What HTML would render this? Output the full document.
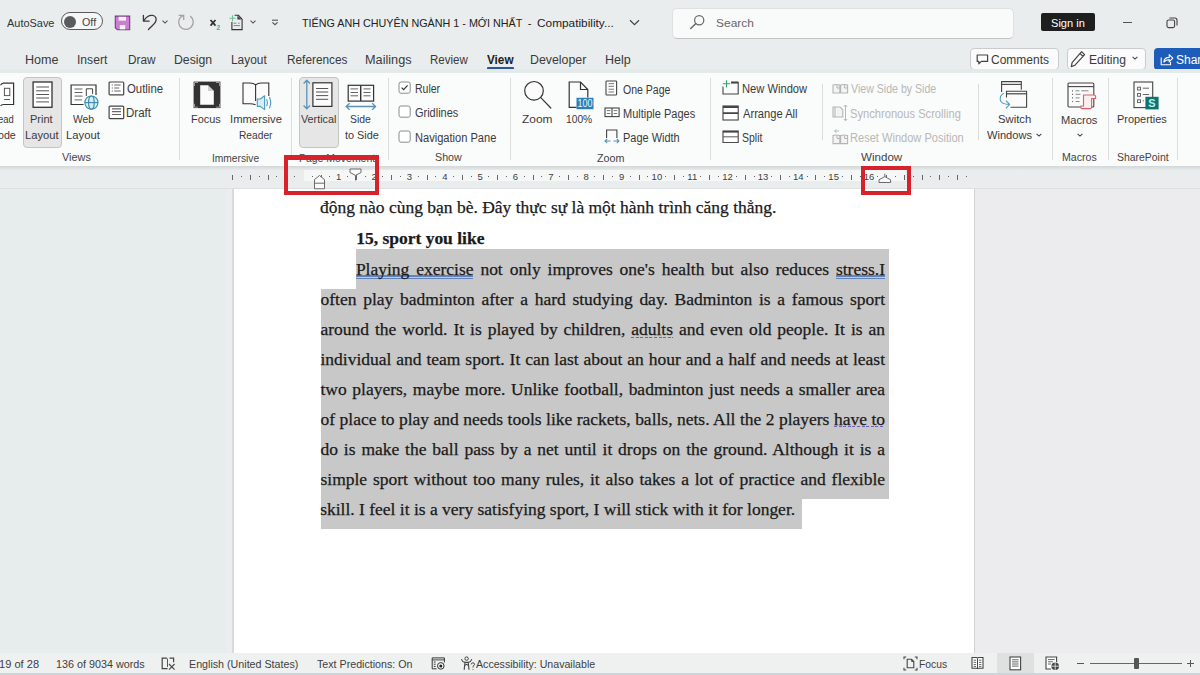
<!DOCTYPE html>
<html><head><meta charset="utf-8"><style>
html,body{margin:0;padding:0;}
body{width:1200px;height:675px;overflow:hidden;position:relative;background:#e7ecec;font-family:"Liberation Sans",sans-serif;}
.a{position:absolute;}
.tx{position:absolute;white-space:nowrap;line-height:1;transform-origin:0 0;}
.dl{position:absolute;white-space:nowrap;font-family:"Liberation Serif",serif;font-size:17.49px;line-height:1;color:#1a1a1a;-webkit-text-stroke:0.25px #1a1a1a;}
.j{text-align:justify;text-align-last:justify;white-space:normal;}

</style></head><body>
<!-- title + tabs background -->
<div class="a" style="left:0;top:0;width:1200px;height:72px;background:#e9eded;"></div>
<!-- autosave toggle -->
<div class="a" style="left:61px;top:12px;width:40px;height:16px;border:1px solid #5a5a5a;border-radius:10px;background:#f6f7f8;"></div>
<div class="a" style="left:64px;top:16px;width:12px;height:12px;border-radius:50%;background:#5b5b5b;"></div>
<!-- search box -->
<div class="a" style="left:672px;top:8.2px;width:342px;height:30.4px;background:#f9fafa;border:1px solid #dde1e1;border-bottom:1.5px solid #bfc3c3;border-radius:5px;box-sizing:border-box;"></div>
<!-- sign in -->
<div class="a" style="left:1041px;top:13px;width:54px;height:18px;background:#1e1e1e;border-radius:2px;"></div>
<!-- minimize -->
<div class="a" style="left:1123px;top:21.5px;width:9px;height:1.2px;background:#555;"></div>
<!-- tab underline -->
<div class="a" style="left:487px;top:67.2px;width:27px;height:2.6px;background:#2a5699;border-radius:1px;"></div>
<!-- buttons -->
<div class="a" style="left:969.5px;top:48px;width:89px;height:21.5px;border:1px solid #c9cbcd;border-radius:4px;background:#fbfbfb;box-sizing:border-box;"></div>
<div class="a" style="left:1066.5px;top:48px;width:79px;height:21.5px;border:1px solid #c9cbcd;border-radius:4px;background:#fbfbfb;box-sizing:border-box;"></div>
<div class="a" style="left:1153.5px;top:48px;width:60px;height:21.5px;border-radius:4px;background:#1d5cb8;"></div>
<!-- ribbon -->
<div class="a" style="left:0;top:69px;width:1200px;height:3.5px;background:#e4e9e9;"></div>
<div class="a" style="left:0;top:72.5px;width:1200px;height:93.5px;background:#fafbfb;"></div>

<!-- group separators -->
<div class="a" style="left:179px;top:78px;width:1px;height:82px;background:#dcdcdc;"></div>
<div class="a" style="left:291px;top:78px;width:1px;height:82px;background:#dcdcdc;"></div>
<div class="a" style="left:387.5px;top:78px;width:1px;height:82px;background:#dcdcdc;"></div>
<div class="a" style="left:509.5px;top:78px;width:1px;height:82px;background:#dcdcdc;"></div>
<div class="a" style="left:710px;top:78px;width:1px;height:82px;background:#dcdcdc;"></div>
<div class="a" style="left:822px;top:84px;width:1px;height:56px;background:#dcdcdc;"></div>
<div class="a" style="left:978px;top:84px;width:1px;height:56px;background:#dcdcdc;"></div>
<div class="a" style="left:1052px;top:78px;width:1px;height:82px;background:#dcdcdc;"></div>
<div class="a" style="left:1108px;top:78px;width:1px;height:82px;background:#dcdcdc;"></div>
<div class="a" style="left:1177px;top:78px;width:1px;height:82px;background:#dcdcdc;"></div>
<!-- active buttons -->
<div class="a" style="left:22.5px;top:77px;width:39.5px;height:71px;border:1px solid #c4c4c4;border-radius:4px;background:#e6e6e6;box-sizing:border-box;"></div>
<div class="a" style="left:299px;top:77px;width:40px;height:70.5px;border:1px solid #c4c4c4;border-radius:4px;background:#e6e6e6;box-sizing:border-box;"></div>
<!-- ruler strip -->
<div class="a" style="left:0;top:166px;width:1200px;height:22.5px;background:#e9eded;"></div>
<div class="a" style="left:0;top:165.5px;width:1200px;height:4px;background:linear-gradient(#d3d7d7,#e6eaea);"></div>
<div class="a" style="left:303.5px;top:169.8px;width:601px;height:11.4px;background:#f6f8f8;"></div>
<div class="a" style="left:0;top:188px;width:1200px;height:1px;background:#dde1e1;"></div>
<!-- page -->
<div class="a" style="left:975px;top:189px;width:225px;height:464px;background:#ecebee;"></div>
<div class="a" style="left:226px;top:189px;width:7px;height:464px;background:#ebedee;"></div>
<div class="a" style="left:232.3px;top:189px;width:1.6px;height:464px;background:#d9dada;"></div>
<div class="a" style="left:973.8px;top:189px;width:1.4px;height:464px;background:#d2d2d2;"></div>
<div class="a" style="left:233.9px;top:189px;width:739.9px;height:464px;background:#ffffff;"></div>
<!-- status bar -->
<div class="a" style="left:0;top:653px;width:1200px;height:22px;background:#eff1f1;"></div>
<div class="a" style="left:0;top:673.1px;width:1200px;height:1.9px;background:#cbd6da;"></div>
<div class="a" style="left:996.5px;top:653px;width:37.5px;height:20px;background:#dfe1e1;"></div>
<div class="a" style="left:1089.5px;top:662.6px;width:92px;height:1px;background:#666;"></div>
<div class="a" style="left:1134px;top:658px;width:4.7px;height:11px;background:#555;border-radius:1px;"></div>
<div class="a" style="left:1077px;top:662.5px;width:7px;height:1.3px;background:#555;"></div>
<div class="a" style="left:1187px;top:662.5px;width:7px;height:1.3px;background:#555;"></div>
<div class="a" style="left:1189.9px;top:659.5px;width:1.3px;height:7px;background:#555;"></div>

<div class="a" style="left:232px;top:174.5px;width:1.2px;height:5px;background:#666;"></div>
<div class="a" style="left:241px;top:176.2px;width:1.2px;height:1.2px;background:#666;"></div>
<div class="a" style="left:250px;top:174.5px;width:1.2px;height:5px;background:#666;"></div>
<div class="a" style="left:259px;top:176.2px;width:1.2px;height:1.2px;background:#666;"></div>
<div class="a" style="left:268px;top:174.5px;width:1.2px;height:5px;background:#666;"></div>
<div class="a" style="left:276px;top:176.2px;width:1.2px;height:1.2px;background:#666;"></div>
<div class="a" style="left:285px;top:174.5px;width:1.2px;height:5px;background:#666;"></div>
<div class="a" style="left:294px;top:176.2px;width:1.2px;height:1.2px;background:#666;"></div>
<div class="a" style="left:312px;top:176.2px;width:1.2px;height:1.2px;background:#666;"></div>
<div class="a" style="left:321px;top:174.5px;width:1.2px;height:5px;background:#666;"></div>
<div class="a" style="left:329px;top:176.2px;width:1.2px;height:1.2px;background:#666;"></div>
<span class="a" style="left:323.75px;top:172.3px;width:30px;text-align:center;font-size:9.5px;line-height:9px;color:#3d3d3d;">1</span>
<div class="a" style="left:347px;top:176.2px;width:1.2px;height:1.2px;background:#666;"></div>
<div class="a" style="left:356px;top:174.5px;width:1.2px;height:5px;background:#666;"></div>
<div class="a" style="left:365px;top:176.2px;width:1.2px;height:1.2px;background:#666;"></div>
<span class="a" style="left:359.10px;top:172.3px;width:30px;text-align:center;font-size:9.5px;line-height:9px;color:#3d3d3d;">2</span>
<div class="a" style="left:382px;top:176.2px;width:1.2px;height:1.2px;background:#666;"></div>
<div class="a" style="left:391px;top:174.5px;width:1.2px;height:5px;background:#666;"></div>
<div class="a" style="left:400px;top:176.2px;width:1.2px;height:1.2px;background:#666;"></div>
<span class="a" style="left:394.45px;top:172.3px;width:30px;text-align:center;font-size:9.5px;line-height:9px;color:#3d3d3d;">3</span>
<div class="a" style="left:418px;top:176.2px;width:1.2px;height:1.2px;background:#666;"></div>
<div class="a" style="left:427px;top:174.5px;width:1.2px;height:5px;background:#666;"></div>
<div class="a" style="left:435px;top:176.2px;width:1.2px;height:1.2px;background:#666;"></div>
<span class="a" style="left:429.80px;top:172.3px;width:30px;text-align:center;font-size:9.5px;line-height:9px;color:#3d3d3d;">4</span>
<div class="a" style="left:453px;top:176.2px;width:1.2px;height:1.2px;background:#666;"></div>
<div class="a" style="left:462px;top:174.5px;width:1.2px;height:5px;background:#666;"></div>
<div class="a" style="left:471px;top:176.2px;width:1.2px;height:1.2px;background:#666;"></div>
<span class="a" style="left:465.15px;top:172.3px;width:30px;text-align:center;font-size:9.5px;line-height:9px;color:#3d3d3d;">5</span>
<div class="a" style="left:488px;top:176.2px;width:1.2px;height:1.2px;background:#666;"></div>
<div class="a" style="left:497px;top:174.5px;width:1.2px;height:5px;background:#666;"></div>
<div class="a" style="left:506px;top:176.2px;width:1.2px;height:1.2px;background:#666;"></div>
<span class="a" style="left:500.50px;top:172.3px;width:30px;text-align:center;font-size:9.5px;line-height:9px;color:#3d3d3d;">6</span>
<div class="a" style="left:524px;top:176.2px;width:1.2px;height:1.2px;background:#666;"></div>
<div class="a" style="left:533px;top:174.5px;width:1.2px;height:5px;background:#666;"></div>
<div class="a" style="left:541px;top:176.2px;width:1.2px;height:1.2px;background:#666;"></div>
<span class="a" style="left:535.85px;top:172.3px;width:30px;text-align:center;font-size:9.5px;line-height:9px;color:#3d3d3d;">7</span>
<div class="a" style="left:559px;top:176.2px;width:1.2px;height:1.2px;background:#666;"></div>
<div class="a" style="left:568px;top:174.5px;width:1.2px;height:5px;background:#666;"></div>
<div class="a" style="left:577px;top:176.2px;width:1.2px;height:1.2px;background:#666;"></div>
<span class="a" style="left:571.20px;top:172.3px;width:30px;text-align:center;font-size:9.5px;line-height:9px;color:#3d3d3d;">8</span>
<div class="a" style="left:594px;top:176.2px;width:1.2px;height:1.2px;background:#666;"></div>
<div class="a" style="left:603px;top:174.5px;width:1.2px;height:5px;background:#666;"></div>
<div class="a" style="left:612px;top:176.2px;width:1.2px;height:1.2px;background:#666;"></div>
<span class="a" style="left:606.55px;top:172.3px;width:30px;text-align:center;font-size:9.5px;line-height:9px;color:#3d3d3d;">9</span>
<div class="a" style="left:630px;top:176.2px;width:1.2px;height:1.2px;background:#666;"></div>
<div class="a" style="left:639px;top:174.5px;width:1.2px;height:5px;background:#666;"></div>
<div class="a" style="left:647px;top:176.2px;width:1.2px;height:1.2px;background:#666;"></div>
<span class="a" style="left:641.90px;top:172.3px;width:30px;text-align:center;font-size:9.5px;line-height:9px;color:#3d3d3d;">10</span>
<div class="a" style="left:665px;top:176.2px;width:1.2px;height:1.2px;background:#666;"></div>
<div class="a" style="left:674px;top:174.5px;width:1.2px;height:5px;background:#666;"></div>
<div class="a" style="left:683px;top:176.2px;width:1.2px;height:1.2px;background:#666;"></div>
<span class="a" style="left:677.25px;top:172.3px;width:30px;text-align:center;font-size:9.5px;line-height:9px;color:#3d3d3d;">11</span>
<div class="a" style="left:700px;top:176.2px;width:1.2px;height:1.2px;background:#666;"></div>
<div class="a" style="left:709px;top:174.5px;width:1.2px;height:5px;background:#666;"></div>
<div class="a" style="left:718px;top:176.2px;width:1.2px;height:1.2px;background:#666;"></div>
<span class="a" style="left:712.60px;top:172.3px;width:30px;text-align:center;font-size:9.5px;line-height:9px;color:#3d3d3d;">12</span>
<div class="a" style="left:736px;top:176.2px;width:1.2px;height:1.2px;background:#666;"></div>
<div class="a" style="left:745px;top:174.5px;width:1.2px;height:5px;background:#666;"></div>
<div class="a" style="left:754px;top:176.2px;width:1.2px;height:1.2px;background:#666;"></div>
<span class="a" style="left:747.95px;top:172.3px;width:30px;text-align:center;font-size:9.5px;line-height:9px;color:#3d3d3d;">13</span>
<div class="a" style="left:771px;top:176.2px;width:1.2px;height:1.2px;background:#666;"></div>
<div class="a" style="left:780px;top:174.5px;width:1.2px;height:5px;background:#666;"></div>
<div class="a" style="left:789px;top:176.2px;width:1.2px;height:1.2px;background:#666;"></div>
<span class="a" style="left:783.30px;top:172.3px;width:30px;text-align:center;font-size:9.5px;line-height:9px;color:#3d3d3d;">14</span>
<div class="a" style="left:807px;top:176.2px;width:1.2px;height:1.2px;background:#666;"></div>
<div class="a" style="left:815px;top:174.5px;width:1.2px;height:5px;background:#666;"></div>
<div class="a" style="left:824px;top:176.2px;width:1.2px;height:1.2px;background:#666;"></div>
<span class="a" style="left:818.65px;top:172.3px;width:30px;text-align:center;font-size:9.5px;line-height:9px;color:#3d3d3d;">15</span>
<div class="a" style="left:842px;top:176.2px;width:1.2px;height:1.2px;background:#666;"></div>
<div class="a" style="left:851px;top:174.5px;width:1.2px;height:5px;background:#666;"></div>
<div class="a" style="left:860px;top:176.2px;width:1.2px;height:1.2px;background:#666;"></div>
<span class="a" style="left:854.00px;top:172.3px;width:30px;text-align:center;font-size:9.5px;line-height:9px;color:#3d3d3d;">16</span>
<div class="a" style="left:877px;top:176.2px;width:1.2px;height:1.2px;background:#666;"></div>
<div class="a" style="left:886px;top:174.5px;width:1.2px;height:5px;background:#666;"></div>
<div class="a" style="left:895px;top:176.2px;width:1.2px;height:1.2px;background:#666;"></div>
<div class="a" style="left:904px;top:174.5px;width:1.2px;height:5px;background:#666;"></div>
<div class="a" style="left:913px;top:176.2px;width:1.2px;height:1.2px;background:#666;"></div>
<div class="a" style="left:922px;top:174.5px;width:1.2px;height:5px;background:#666;"></div>
<div class="a" style="left:930px;top:176.2px;width:1.2px;height:1.2px;background:#666;"></div>
<div class="a" style="left:939px;top:174.5px;width:1.2px;height:5px;background:#666;"></div>
<div class="a" style="left:948px;top:176.2px;width:1.2px;height:1.2px;background:#666;"></div>
<div class="a" style="left:957px;top:174.5px;width:1.2px;height:5px;background:#666;"></div>
<div class="a" style="left:966px;top:176.2px;width:1.2px;height:1.2px;background:#666;"></div>
<svg class="a" style="left:313px;top:173.5px" width="13" height="16" viewBox="0 0 13 16">
<path d="M1.5 14.8 V5.6 L6.5 1.5 L11.5 5.6 V14.8 Z M1.5 9.2 H11.5" fill="#fafafa" stroke="#6a6a6a" stroke-width="1" stroke-linejoin="round"/></svg>
<svg class="a" style="left:348.5px;top:167.5px" width="13" height="13" viewBox="0 0 13 13">
<path d="M1 1 H12 V4.5 L6.5 7.4 L1 4.5 Z" fill="#fafafa" stroke="#6a6a6a" stroke-width="1" stroke-linejoin="round"/><path d="M6.5 7.4 V12.5" stroke="#6a6a6a" stroke-width="1"/></svg>
<svg class="a" style="left:877.5px;top:173px" width="14" height="11" viewBox="0 0 14 11">
<path d="M1 9.5 V6.8 L6.8 3.6 L12.6 6.8 V9.5 Z" fill="#fafafa" stroke="#6a6a6a" stroke-width="1" stroke-linejoin="round"/><path d="M6.8 3.6 V0.8" stroke="#6a6a6a" stroke-width="1"/></svg>
<div class="a" style="left:356px;top:249px;width:533px;height:39.7px;background:#c8c8c8;"></div>
<div class="a" style="left:320.7px;top:288.7px;width:568.3px;height:210.1px;background:#c8c8c8;"></div>
<div class="a" style="left:320.7px;top:498.8px;width:481.1px;height:29.8px;background:#c8c8c8;"></div>
<div class="a" style="left:356px;top:275.4px;width:117px;height:1.3px;background:#6383bb;"></div>
<div class="a" style="left:356px;top:277.6px;width:117px;height:1.3px;background:#6383bb;"></div>
<div class="a" style="left:835.7px;top:275.4px;width:49.3px;height:1.3px;background:#6383bb;"></div>
<div class="a" style="left:835.7px;top:277.6px;width:49.3px;height:1.3px;background:#6383bb;"></div>
<div class="a" style="left:631px;top:336.5px;width:42px;height:1.8px;background:repeating-linear-gradient(90deg,#6e62b6 0 3px,transparent 3px 4.6px);"></div>
<div class="a" style="left:833.8px;top:425.5px;width:51.2px;height:1.8px;background:repeating-linear-gradient(90deg,#6e62b6 0 3px,transparent 3px 4.6px);"></div>
<div class="dl" style="left:320.0px;top:198.85px;">động nào cùng bạn bè. Đây thực sự là một hành trình căng thẳng.</div>
<div class="dl" style="left:356.2px;top:230.15px;font-weight:700;">15, sport you like</div>
<div class="dl j" style="left:355.9px;top:260.55px;width:529.1px;">Playing exercise not only improves one's health but also reduces stress.I</div>
<div class="dl j" style="left:320.5px;top:290.55px;width:564.5px;">often play badminton after a hard studying day. Badminton is a famous sport</div>
<div class="dl j" style="left:320.5px;top:320.55px;width:564.5px;">around the world. It is played by children, adults and even old people. It is an</div>
<div class="dl j" style="left:320.5px;top:350.55px;width:564.5px;">individual and team sport. It can last about an hour and a half and needs at least</div>
<div class="dl j" style="left:320.5px;top:380.55px;width:564.5px;">two players, maybe more. Unlike football, badminton just needs a smaller area</div>
<div class="dl j" style="left:320.5px;top:410.55px;width:564.5px;">of place to play and needs tools like rackets, balls, nets. All the 2 players have to</div>
<div class="dl j" style="left:320.5px;top:440.55px;width:564.5px;">do is make the ball pass by a net until it drops on the ground. Although it is a</div>
<div class="dl j" style="left:320.5px;top:470.55px;width:564.5px;">simple sport without too many rules, it also takes a lot of practice and flexible</div>
<div class="dl" style="left:320.2px;top:500.55px;">skill. I feel it is a very satisfying sport, I will stick with it for longer.</div>
<!-- save -->
<svg class="a" style="left:114px;top:14.5px" width="17" height="16" viewBox="0 0 17 16">
<path d="M1.3 1.1 H15.7 V14.8 H3.4 L1.3 12.7 Z" fill="#c980d3" stroke="#7b3c85" stroke-width="1.1"/>
<rect x="4.6" y="1.8" width="7.4" height="3.8" fill="#fbf3fc"/>
<rect x="5.8" y="10.1" width="5.4" height="4.2" fill="#fbf3fc"/>
</svg>
<!-- undo -->
<svg class="a" style="left:142px;top:14px" width="16" height="17" viewBox="0 0 16 17">
<path d="M1.9 6.6 C4 3 7.5 1.1 10.6 1.4 C14 1.8 15 5.2 13.4 8.2 C12 10.6 8.6 13 6.4 15.6" fill="none" stroke="#3a3a3a" stroke-width="1.3" stroke-linecap="round"/>
<path d="M1.4 1.3 V7.1 H7.2" fill="none" stroke="#3a3a3a" stroke-width="1.3" stroke-linecap="round" stroke-linejoin="round"/>
</svg>
<svg class="a" style="left:162px;top:20px" width="6" height="4" viewBox="0 0 6 4"><path d="M0.5 0.7 L3 3.1 L5.5 0.7" fill="none" stroke="#555" stroke-width="1.1"/></svg>
<!-- redo -->
<svg class="a" style="left:177px;top:13px" width="18" height="18" viewBox="0 0 18 18">
<path d="M6.2 2.3 A7.3 7.3 0 1 0 13.2 3.1" fill="none" stroke="#a3a3a3" stroke-width="1.3"/>
<path d="M1.6 2.4 H6.7 V7" fill="none" stroke="#a3a3a3" stroke-width="1.3" stroke-linejoin="miter"/>
</svg>
<!-- x2 -->
<svg class="a" style="left:209px;top:18px" width="13" height="13" viewBox="0 0 13 13">
<path d="M1.5 2 L6.5 7.6 M6.5 2 L1.5 7.6" stroke="#333" stroke-width="1.8"/>
<text x="7.4" y="11.6" font-family="Liberation Sans" font-size="6.5" font-weight="700" fill="#5b9cb5">2</text>
</svg>
<!-- new doc -->
<svg class="a" style="left:227.5px;top:14px" width="16" height="17" viewBox="0 0 16 17">
<path d="M3.9 8 V15.6 H14.1 V5.2 L10.5 1.3 H6.6" fill="none" stroke="#333" stroke-width="1.1"/>
<path d="M9.4 1.5 L13.8 5.6 L9.4 5.6 Z" fill="#444"/>
<path d="M1.4 4.3 H7.6 M4.5 1.3 V7.2" stroke="#6cc095" stroke-width="1.1"/>
<path d="M5.6 9.2 H8.4 M10 9.2 H11.6 M5.6 11.6 H12" stroke="#777" stroke-width="0.9"/>
</svg>
<svg class="a" style="left:250.3px;top:20.2px" width="6" height="4" viewBox="0 0 6 4"><path d="M0.5 0.7 L3 3.1 L5.5 0.7" fill="none" stroke="#555" stroke-width="1.1"/></svg>
<!-- customize -->
<svg class="a" style="left:270.5px;top:18.5px" width="8" height="7" viewBox="0 0 8 7"><path d="M1 1.2 H7" stroke="#555" stroke-width="1.1"/><path d="M1.4 3.4 L4 5.8 L6.6 3.4" fill="none" stroke="#555" stroke-width="1.2"/></svg>
<!-- title chevron -->
<svg class="a" style="left:629px;top:18.5px" width="11" height="7" viewBox="0 0 11 7"><path d="M1 1.2 L5.5 5.6 L10 1.2" fill="none" stroke="#444" stroke-width="1.2"/></svg>
<!-- search icon -->
<svg class="a" style="left:689px;top:14px" width="17" height="16" viewBox="0 0 17 16"><circle cx="10.2" cy="6.2" r="4.6" fill="none" stroke="#666" stroke-width="1.2"/><path d="M6.9 9.5 L1.7 14.6" stroke="#666" stroke-width="1.4" stroke-linecap="round"/></svg>
<!-- restore -->
<svg class="a" style="left:1166px;top:17px" width="12" height="12" viewBox="0 0 12 12"><rect x="1" y="3" width="7.6" height="7.6" rx="1.6" fill="none" stroke="#444" stroke-width="1.1"/><path d="M3.4 1 H8.8 Q11 1 11 3.2 V8.6" fill="none" stroke="#444" stroke-width="1.1"/></svg>
<!-- comments icon -->
<svg class="a" style="left:976px;top:53.5px" width="13" height="11" viewBox="0 0 13 11"><path d="M1.2 1 H11.6 V7.4 H5.4 L2.8 9.8 V7.4 H1.2 Z" fill="none" stroke="#444" stroke-width="1.2" stroke-linejoin="round"/></svg>
<!-- pencil -->
<svg class="a" style="left:1070px;top:50px" width="16" height="18" viewBox="0 0 16 18"><path d="M11.6 1.6 L14.6 4.6 L5 15.2 L1.3 16.6 L2.1 12.6 Z M10 3.5 L13 6.4" fill="none" stroke="#444" stroke-width="1.2" stroke-linejoin="round"/></svg>
<svg class="a" style="left:1131.5px;top:56px" width="6" height="4" viewBox="0 0 6 4"><path d="M0.6 0.8 L3 3.1 L5.4 0.8" fill="none" stroke="#444" stroke-width="1.1"/></svg>
<!-- share icon -->
<svg class="a" style="left:1159.5px;top:52px" width="14" height="14" viewBox="0 0 14 14"><path d="M1.2 5.5 V12.8 H10.5 V10" fill="none" stroke="#fff" stroke-width="1.1"/><path d="M3.8 10 C4.2 6.8 6.6 5.4 9.2 5.4 V2.6 L12.8 6.2 L9.2 9.8 V7.6 C7 7.6 5.5 8.2 3.8 10 Z" fill="none" stroke="#fff" stroke-width="1.1" stroke-linejoin="round"/></svg>
<!-- read mode (cut) -->
<svg class="a" style="left:0;top:82px" width="15" height="24" viewBox="0 0 15 24">
<path d="M0.6 3.2 Q1.5 1.3 3.5 1.2 H13.6 V22.5 H3.5 Q1.5 22.6 0.6 24" fill="#fff" stroke="#333" stroke-width="1.2"/>
<rect x="4.4" y="6.3" width="5.4" height="7.3" fill="none" stroke="#555" stroke-width="1"/>
<path d="M4.2 17.5 H10" stroke="#555" stroke-width="1"/>
</svg>
<!-- print layout -->
<svg class="a" style="left:31.5px;top:80.5px" width="21" height="27" viewBox="0 0 21 27">
<rect x="1.1" y="1" width="18.9" height="25.3" fill="#fff" stroke="#333" stroke-width="1.3"/>
<path d="M4.2 6 H17 M4.2 9.8 H17 M4.2 13.5 H17 M4.2 17 H17 M4.2 20.9 H17" stroke="#555" stroke-width="1"/>
</svg>
<!-- web layout -->
<svg class="a" style="left:69.5px;top:83.5px" width="30" height="28" viewBox="0 0 30 28">
<path d="M13.5 20.5 H1.1 V1 H26 V11" fill="#fff" stroke="#333" stroke-width="1.2"/>
<path d="M4.5 5 H12.5 M4.5 8.5 H12.5 M4.5 12.1 H12.5 M4.5 15.9 H12" stroke="#666" stroke-width="1"/>
<path d="M16.3 12 V4.8 H22.6 V10" fill="none" stroke="#444" stroke-width="1"/>
<circle cx="21.4" cy="18.6" r="6.6" fill="#cfeff9" stroke="#3f88a6" stroke-width="1.1"/>
<path d="M14.8 18.6 H28" stroke="#3f88a6" stroke-width="1.1"/>
<ellipse cx="21.4" cy="18.6" rx="2.8" ry="6.6" fill="none" stroke="#3f88a6" stroke-width="1.1"/>
</svg>
<!-- outline -->
<svg class="a" style="left:107.5px;top:80.5px" width="17" height="15" viewBox="0 0 17 15">
<rect x="1.1" y="1" width="14.6" height="12.9" rx="1" fill="#fff" stroke="#444" stroke-width="1.2"/>
<path d="M3.8 4 H4.8 M3.8 7 H4.8 M3.8 10 H4.8" stroke="#555" stroke-width="1.1"/>
<path d="M6.2 4 H12.6 M6.2 7 H11.2 M6.2 10 H12.6" stroke="#666" stroke-width="1"/>
</svg>
<!-- draft -->
<svg class="a" style="left:107.5px;top:105px" width="17" height="15" viewBox="0 0 17 15">
<rect x="1.1" y="1.1" width="14.6" height="12.6" rx="1" fill="#fff" stroke="#444" stroke-width="1.2"/>
<path d="M4 3.9 H13 M4 6.6 H13 M4 9.5 H13" stroke="#666" stroke-width="1.1"/>
</svg>
<!-- focus -->
<svg class="a" style="left:192.5px;top:80.5px" width="28" height="28" viewBox="0 0 28 28">
<rect x="0.6" y="0.6" width="26.8" height="26.5" fill="#333"/>
<path d="M1.5 5 V1.5 H5 M23 1.5 H26.5 V5 M26.5 22.8 V26.2 H23 M5 26.2 H1.5 V22.8" fill="none" stroke="#999" stroke-width="1"/>
<path d="M7.2 4.3 H15 L20.8 10 V23.7 H7.2 Z" fill="#fbfbfb"/>
<path d="M15 4.3 V10 H20.8 Z" fill="#cfcfcf"/>
</svg>
<!-- immersive reader -->
<svg class="a" style="left:241.5px;top:81.5px" width="31" height="29" viewBox="0 0 31 29">
<path d="M13.6 22.8 Q11 21.7 8 21.7 H1 V1 H8 Q11.5 1 13.6 2.8 Q15.7 1 19.2 1 H26.8 V14" fill="#fbfbfb" stroke="#333" stroke-width="1.1"/>
<path d="M13.6 2.8 V19" stroke="#333" stroke-width="1.1"/>
<path d="M15.3 17 H18.3 L22.6 13.8 V27.6 L18.3 24.4 H15.3 Z" fill="#d5eef8" stroke="#4c9cc0" stroke-width="1.1" stroke-linejoin="round"/>
<path d="M24.8 17.6 Q26 20.7 24.8 23.8 M27.6 15.5 Q29.8 20.7 27.6 25.9" fill="none" stroke="#4c9cc0" stroke-width="1.1" stroke-linecap="round"/>
</svg>
<!-- vertical -->
<svg class="a" style="left:302px;top:79px" width="31" height="31" viewBox="0 0 31 31">
<path d="M4.8 1.2 V29.8 M1.6 4.5 L4.8 1.2 L8 4.5 M1.6 26.5 L4.8 29.8 L8 26.5" fill="none" stroke="#5b93b5" stroke-width="1.3" stroke-linejoin="round"/>
<rect x="10.9" y="3.8" width="19" height="23.6" fill="#fbfbfb" stroke="#333" stroke-width="1.2"/>
<path d="M14 9.5 H26.2 M14 13 H26.2 M14 16.6 H26.2 M14 20.3 H26.2" stroke="#555" stroke-width="1"/>
</svg>
<!-- side to side -->
<svg class="a" style="left:345px;top:83.5px" width="32" height="27" viewBox="0 0 32 27">
<rect x="3.2" y="1.3" width="25.4" height="15.8" fill="#fbfbfb" stroke="#333" stroke-width="1.2"/>
<path d="M15.7 1.3 V17.1" stroke="#333" stroke-width="1.4"/>
<path d="M5.5 4.9 H13 M5.5 8.5 H13 M5.5 11.8 H13 M18.5 4.9 H25.5 M18.5 8.5 H25.5 M18.5 11.8 H25.5" stroke="#666" stroke-width="1"/>
<path d="M1.2 22.5 H30.6 M4.6 19.2 L1.2 22.5 L4.6 25.8 M27.2 19.2 L30.6 22.5 L27.2 25.8" fill="none" stroke="#5b93b5" stroke-width="1.3" stroke-linejoin="round"/>
</svg>
<!-- checkboxes -->
<svg class="a" style="left:397.5px;top:81px" width="13" height="13" viewBox="0 0 13 13"><rect x="1" y="1" width="11.2" height="11.2" rx="2" fill="#fff" stroke="#8c8c8c" stroke-width="1"/><path d="M3.6 6.6 L5.6 8.6 L9.6 4.4" fill="none" stroke="#333" stroke-width="1.2"/></svg>
<svg class="a" style="left:397.5px;top:105px" width="13" height="13" viewBox="0 0 13 13"><rect x="1" y="1" width="11.2" height="11.2" rx="2" fill="#fff" stroke="#8c8c8c" stroke-width="1"/></svg>
<svg class="a" style="left:397.5px;top:129.8px" width="13" height="13" viewBox="0 0 13 13"><rect x="1" y="1" width="11.2" height="11.2" rx="2" fill="#fff" stroke="#8c8c8c" stroke-width="1"/></svg>
<!-- zoom -->
<svg class="a" style="left:523px;top:80px" width="30" height="30" viewBox="0 0 30 30">
<circle cx="11" cy="10.8" r="9.3" fill="#fbfbfb" stroke="#333" stroke-width="1.2"/>
<path d="M17.8 17.6 L27.8 28" stroke="#333" stroke-width="1.2" stroke-linecap="round"/>
</svg>
<!-- 100% -->
<svg class="a" style="left:567.5px;top:80.5px" width="27" height="29" viewBox="0 0 27 29">
<path d="M8.5 26.4 H1.2 V1 H12.5 L19.8 8.5 V16.6" fill="#fbfbfb" stroke="#333" stroke-width="1.2"/>
<path d="M12.5 1 V8.5 H19.8" fill="none" stroke="#333" stroke-width="1.2"/>
<rect x="8.5" y="16.8" width="17" height="11.4" fill="#2b7fb8"/>
<text x="17" y="26.2" text-anchor="middle" font-family="Liberation Sans" font-size="10" fill="#e9f6ff" textLength="15" lengthAdjust="spacingAndGlyphs">100</text>
</svg>
<!-- one page -->
<svg class="a" style="left:605px;top:79.8px" width="13" height="16" viewBox="0 0 13 16">
<rect x="1" y="1" width="10.6" height="14" rx="0.8" fill="#fff" stroke="#444" stroke-width="1.1"/>
<path d="M3.5 3.7 H9 M3.5 6.3 H9 M3.5 9.2 H9 M3.5 12 H9" stroke="#666" stroke-width="0.9"/>
</svg>
<!-- multiple pages -->
<svg class="a" style="left:603.5px;top:107px" width="16" height="11" viewBox="0 0 16 11">
<rect x="1" y="1" width="14.1" height="8.6" fill="#fff" stroke="#444" stroke-width="1.1"/>
<path d="M8 1 V9.6" stroke="#444" stroke-width="1.1"/>
<path d="M2.8 3.6 H6.4 M2.8 6.5 H6.4 M9.6 3.6 H13.2 M9.6 6.5 H13.2" stroke="#666" stroke-width="0.9"/>
</svg>
<!-- page width -->
<svg class="a" style="left:603.5px;top:128.5px" width="16" height="15" viewBox="0 0 16 15">
<path d="M2.6 9 V1 H12.9 V9" fill="none" stroke="#444" stroke-width="1.1"/>
<path d="M1 12 H6.5 M3.2 9.9 L1 12 L3.2 14.1 M9.5 12 H15 M12.8 9.9 L15 12 L12.8 14.1" fill="none" stroke="#5a96b0" stroke-width="1.1"/>
</svg>
<!-- new window -->
<svg class="a" style="left:721.5px;top:80px" width="17" height="15" viewBox="0 0 17 15">
<path d="M1 6.5 V14 H16.2 V2.2 H9" fill="none" stroke="#444" stroke-width="1.1"/>
<path d="M9 2.6 H16.2" stroke="#444" stroke-width="1.9"/>
<path d="M0.8 3.8 H8.2 M4.5 0.2 V7.6" stroke="#3aa36a" stroke-width="1.1"/>
</svg>
<!-- arrange all -->
<svg class="a" style="left:721.5px;top:104.5px" width="17" height="16" viewBox="0 0 17 16">
<rect x="1" y="1" width="15.2" height="14" fill="#fff" stroke="#444" stroke-width="1.1"/>
<path d="M1 2 H16.2 M1 8.2 H16.2" stroke="#444" stroke-width="1.8"/>
</svg>
<!-- split -->
<svg class="a" style="left:721.5px;top:130px" width="17" height="13" viewBox="0 0 17 13">
<rect x="1" y="1" width="15.2" height="11.6" fill="#fff" stroke="#444" stroke-width="1.1"/>
<path d="M1 1.8 H16.2" stroke="#444" stroke-width="1.6"/>
<path d="M1 6.8 H16.2" stroke="#666" stroke-width="1.1"/>
</svg>
<!-- disabled window icons -->
<svg class="a" style="left:831.5px;top:82.5px" width="17" height="11" viewBox="0 0 17 11">
<path d="M1 2 Q4 1 7.8 2 V10 H1 Z M8.6 2 Q12 1 15.6 2 V10 H8.6 Z" fill="#f3f3f3" stroke="#b5b5b5" stroke-width="1.1"/>
<path d="M5 2 V5 H7.8 M12.6 2 V5 H15.6" fill="none" stroke="#b5b5b5" stroke-width="1"/>
</svg>
<svg class="a" style="left:831.5px;top:103.5px" width="16" height="18" viewBox="0 0 16 18">
<path d="M1 3 H8 L10.8 5.8 V13 H1 Z" fill="#f3f3f3" stroke="#b5b5b5" stroke-width="1.1"/>
<path d="M3 3 V13" stroke="#b5b5b5" stroke-width="1"/>
<path d="M13.5 1 V16.8 M11.8 2.8 L13.5 1 L15.2 2.8 M11.8 15 L13.5 16.8 L15.2 15" fill="none" stroke="#b5b5b5" stroke-width="1"/>
</svg>
<svg class="a" style="left:831.5px;top:127.5px" width="17" height="17" viewBox="0 0 17 17">
<path d="M7 3 H2.6 M4.4 1.2 L2.6 3 L4.4 4.8" fill="none" stroke="#b5b5b5" stroke-width="1"/>
<path d="M1 7.5 Q4 6.5 7.8 7.5 V15.6 H1 Z M8.6 7.5 Q12 6.5 15.6 7.5 V15.6 H8.6 Z" fill="#f3f3f3" stroke="#b5b5b5" stroke-width="1.1"/>
<path d="M5 7.5 V10.5 H7.8 M12.6 7.5 V10.5 H15.6" fill="none" stroke="#b5b5b5" stroke-width="1"/>
</svg>
<!-- switch windows -->
<svg class="a" style="left:998px;top:80px" width="30" height="30" viewBox="0 0 30 30">
<path d="M3.6 12 V1.6 H23.3 V9.8" fill="#fbfbfb" stroke="#444" stroke-width="1.1"/>
<path d="M3.6 4.4 H23.3" stroke="#444" stroke-width="1.1"/>
<rect x="8.5" y="11.2" width="20.1" height="16" fill="#fbfbfb" stroke="none"/><path d="M12.6 27.2 H28.6 V11.2 H8.5 V17.6" fill="none" stroke="#444" stroke-width="1.1"/>
<path d="M8.5 13.8 H28.6" stroke="#444" stroke-width="1.2"/>
<path d="M5.6 13.4 Q1.2 16 2.4 20.6 Q3.8 24.2 11.2 24.4 M8.2 20.8 L11.6 24.4 L8.2 28.2" fill="none" stroke="#4a9cc0" stroke-width="1.1" stroke-linecap="round" stroke-linejoin="round"/>
</svg>
<svg class="a" style="left:1035.5px;top:132.5px" width="6" height="4" viewBox="0 0 6 4"><path d="M0.6 0.8 L3 3.1 L5.4 0.8" fill="none" stroke="#444" stroke-width="1.1"/></svg>
<!-- macros -->
<svg class="a" style="left:1066.5px;top:81.5px" width="31" height="28" viewBox="0 0 31 28">
<rect x="1" y="1" width="25.8" height="24" rx="1" fill="#fbfbfb" stroke="#444" stroke-width="1.1"/>
<path d="M1 4.6 H26.8" stroke="#444" stroke-width="1.1"/>
<path d="M5 8.8 H6 M5 12.3 H6 M5 15.9 H6 M5 19.5 H6" stroke="#666" stroke-width="1.2"/>
<path d="M8.6 8.8 H12.4 M14.4 8.8 H21.5 M8.6 12.3 H13.5 M8.6 15.9 H12.5 M8.6 19.5 H12.5" stroke="#888" stroke-width="1"/>
<path d="M16.5 13 H27 Q28.6 13 28.6 14.6 V16.5 H24.6 V25.2 Q24.6 26.6 23 26.6 H15 Q13.8 26.6 13.8 25.4 V24 H16.5 Z" fill="#fbeef0" stroke="#d8606b" stroke-width="1.1" stroke-linejoin="round"/>
</svg>
<svg class="a" style="left:1077px;top:133px" width="6" height="4" viewBox="0 0 6 4"><path d="M0.6 0.8 L3 3.1 L5.4 0.8" fill="none" stroke="#444" stroke-width="1.1"/></svg>
<!-- properties -->
<svg class="a" style="left:1132.5px;top:80.5px" width="27" height="29" viewBox="0 0 27 29">
<rect x="1" y="1" width="18.7" height="25.6" fill="#fbfbfb" stroke="#444" stroke-width="1.1"/>
<rect x="4.6" y="6.2" width="2.9" height="2.8" fill="none" stroke="#555" stroke-width="0.9"/>
<rect x="4.6" y="12.5" width="2.9" height="2.8" fill="none" stroke="#555" stroke-width="0.9"/>
<rect x="4.6" y="18.8" width="2.9" height="2.8" fill="none" stroke="#555" stroke-width="0.9"/>
<path d="M9.8 7.2 H16 M9.8 13.5 H16 M9.8 19.8 H11" stroke="#666" stroke-width="1"/>
<rect x="12.4" y="15.8" width="13.2" height="12.6" fill="#0e7470"/>
<text x="19" y="26" text-anchor="middle" font-family="Liberation Sans" font-weight="700" font-size="11" fill="#b3f0ee">S</text>
</svg>
<!-- proofing -->
<svg class="a" style="left:161px;top:656.5px" width="15" height="14" viewBox="0 0 15 14">
<path d="M6.6 11.6 H1.2 V1.2 H6 M8.5 1.2 H12.6 V5.2" fill="none" stroke="#444" stroke-width="1.2"/>
<path d="M6.5 1.5 L6.5 10" stroke="#444" stroke-width="0.9"/>
<path d="M8 7 L13.6 12.6 M13.6 7 L8 12.6" stroke="#444" stroke-width="1.1"/>
</svg>
<!-- text predictions -->
<svg class="a" style="left:430.5px;top:656.5px" width="15" height="13" viewBox="0 0 15 13">
<path d="M5.6 11.8 H1.2 V0.9 H13.4 V5.4" fill="none" stroke="#333" stroke-width="1"/>
<path d="M1.2 2.9 H13.4" stroke="#333" stroke-width="0.9"/>
<path d="M2.8 5 H4.6 M2.8 7.2 H4.6 M2.8 9.4 H4.6" stroke="#333" stroke-width="1"/>
<circle cx="9.8" cy="8.9" r="3.3" fill="#f4f5f5" stroke="#333" stroke-width="1"/>
<circle cx="9.8" cy="8.9" r="1.5" fill="#222"/>
</svg>
<!-- accessibility -->
<svg class="a" style="left:459.5px;top:655.5px" width="16" height="15" viewBox="0 0 16 15">
<circle cx="6.6" cy="2.6" r="1.7" fill="none" stroke="#444" stroke-width="1"/>
<path d="M1.6 3.6 Q2.4 6 5 6.4 L4.2 13.4 M11.6 3.6 Q10.8 6 8.2 6.4 L9 13.4 M5 6.4 H8.2 M4.6 9.6 L6.6 8.4 L8.6 9.6" fill="none" stroke="#444" stroke-width="1.1" stroke-linecap="round"/>
<path d="M11.2 8.4 Q11.4 6.8 12.9 6.8 Q14.5 6.8 14.5 8.3 Q14.5 9.4 13 10.3 V11.5 M13 13 V13.8" fill="none" stroke="#444" stroke-width="1"/>
</svg>
<!-- focus status -->
<svg class="a" style="left:903px;top:655.5px" width="15" height="15" viewBox="0 0 15 15">
<path d="M1 3.2 V1 H3.2 M11.8 1 H14 V3.2 M14 11.8 V14 H11.8 M3.2 14 H1 V11.8" fill="none" stroke="#444" stroke-width="1.1"/>
<path d="M4.2 3.3 H8.6 L10.8 5.5 V11.7 H4.2 Z" fill="none" stroke="#444" stroke-width="1.1"/>
<path d="M8.6 3.3 V5.5 H10.8" fill="none" stroke="#444" stroke-width="0.9"/>
</svg>
<!-- read mode status -->
<svg class="a" style="left:970.5px;top:655.5px" width="13" height="14" viewBox="0 0 13 14">
<path d="M1 1.5 H5.5 Q6.5 1.5 6.5 2.5 Q6.5 1.5 7.5 1.5 H12 V12.2 H7.5 Q6.5 12.2 6.5 13 Q6.5 12.2 5.5 12.2 H1 Z" fill="#fff" stroke="#444" stroke-width="1.1"/>
<path d="M6.5 2.5 V12.5" stroke="#444" stroke-width="1"/>
<path d="M2.6 4.2 H5 M2.6 6.4 H5 M2.6 8.6 H5 M2.6 10.6 H5 M8 4.2 H10.4 M8 6.4 H10.4 M8 8.6 H10.4 M8 10.6 H10.4" stroke="#555" stroke-width="0.9"/>
</svg>
<!-- print status -->
<svg class="a" style="left:1008.5px;top:655.5px" width="13" height="15" viewBox="0 0 13 15">
<rect x="1" y="1" width="10.6" height="12.8" fill="#fff" stroke="#444" stroke-width="1.1"/>
<path d="M3 3.8 H9.6 M3 5.9 H9.6 M3 8 H9.6 M3 10.1 H9.6" stroke="#555" stroke-width="0.9"/>
</svg>
<!-- web status -->
<svg class="a" style="left:1045px;top:655.5px" width="15" height="15" viewBox="0 0 15 15">
<path d="M6 13 H1 V1 H11.6 V6" fill="#fff" stroke="#444" stroke-width="1.1"/>
<path d="M3 3.6 H9.6 M3 5.8 H8 M3 8 H6" stroke="#555" stroke-width="0.9"/>
<circle cx="10.2" cy="10.2" r="3.8" fill="#444"/>
<path d="M6.4 10.2 H14 M10.2 6.4 V14" stroke="#eee" stroke-width="0.8"/>
</svg>

<span id="t0" class="tx" style="left:7.02px;top:17.55px;font-size:11.3px;color:#333;font-weight:400;transform:scaleX(0.9688);">AutoSave</span><span id="t1" class="tx" style="left:82.00px;top:17.17px;font-size:11.5px;color:#444;font-weight:400;transform:scaleX(0.9333);">Off</span><span id="t2" class="tx" style="left:302.02px;top:17.85px;font-size:11.3px;color:#222;font-weight:400;transform:scaleX(0.9530);">TIẾNG ANH CHUYÊN NGÀNH 1 - MỚI NHẤT</span><span id="t3" class="tx" style="left:527.80px;top:17.85px;font-size:11.3px;color:#222;font-weight:400;">-</span><span id="t4" class="tx" style="left:536.95px;top:17.85px;font-size:11.3px;color:#222;font-weight:400;transform:scaleX(1.0479);">Compatibility...</span><span id="t5" class="tx" style="left:715.94px;top:17.95px;font-size:11.3px;color:#666;font-weight:400;transform:scaleX(1.0588);">Search</span><span id="t6" class="tx" style="left:1051.01px;top:17.85px;font-size:11.3px;color:#fff;font-weight:400;transform:scaleX(0.9794);">Sign in</span><span id="t7" class="tx" style="left:25.33px;top:54.26px;font-size:12px;color:#3a3a3a;font-weight:400;transform:scaleX(1.0467);">Home</span><span id="t8" class="tx" style="left:77.37px;top:54.26px;font-size:12px;color:#3a3a3a;font-weight:400;transform:scaleX(1.0103);">Insert</span><span id="t9" class="tx" style="left:128.01px;top:54.26px;font-size:12px;color:#3a3a3a;font-weight:400;transform:scaleX(0.9821);">Draw</span><span id="t10" class="tx" style="left:174.37px;top:54.26px;font-size:12px;color:#3a3a3a;font-weight:400;transform:scaleX(1.0222);">Design</span><span id="t11" class="tx" style="left:231.01px;top:54.26px;font-size:12px;color:#3a3a3a;font-weight:400;transform:scaleX(0.9914);">Layout</span><span id="t12" class="tx" style="left:287.01px;top:54.26px;font-size:12px;color:#3a3a3a;font-weight:400;transform:scaleX(0.9850);">References</span><span id="t13" class="tx" style="left:364.97px;top:54.26px;font-size:12px;color:#3a3a3a;font-weight:400;transform:scaleX(1.0581);">Mailings</span><span id="t14" class="tx" style="left:430.04px;top:54.26px;font-size:12px;color:#3a3a3a;font-weight:400;transform:scaleX(0.9590);">Review</span><span id="t15" class="tx" style="left:529.97px;top:54.26px;font-size:12px;color:#3a3a3a;font-weight:400;transform:scaleX(1.0296);">Developer</span><span id="t16" class="tx" style="left:604.96px;top:54.26px;font-size:12px;color:#3a3a3a;font-weight:400;transform:scaleX(1.0435);">Help</span><span id="t17" class="tx" style="left:487.00px;top:54.26px;font-size:12px;color:#222;font-weight:700;transform:scaleX(0.9778);">View</span><span id="t18" class="tx" style="left:991.00px;top:53.96px;font-size:12px;color:#3a3a3a;font-weight:400;transform:scaleX(1.0000);">Comments</span><span id="t19" class="tx" style="left:1088.79px;top:53.96px;font-size:12px;color:#3a3a3a;font-weight:400;transform:scaleX(1.0056);">Editing</span><span id="t20" class="tx" style="left:1176.00px;top:53.96px;font-size:12px;color:#fff;font-weight:400;">Shar</span><span id="t21" class="tx" style="left:-2.00px;top:114.15px;font-size:11.3px;color:#3a3a3a;font-weight:400;transform:scaleX(0.8333);">ead</span><span id="t22" class="tx" style="left:-2.00px;top:129.95px;font-size:11.3px;color:#3a3a3a;font-weight:400;transform:scaleX(0.9444);">ode</span><span id="t23" class="tx" style="left:30.20px;top:114.15px;font-size:11.3px;color:#3a3a3a;font-weight:400;transform:scaleX(0.9739);">Print</span><span id="t24" class="tx" style="left:24.61px;top:129.95px;font-size:11.3px;color:#3a3a3a;font-weight:400;transform:scaleX(0.9909);">Layout</span><span id="t25" class="tx" style="left:73.00px;top:114.15px;font-size:11.3px;color:#3a3a3a;font-weight:400;transform:scaleX(0.9130);">Web</span><span id="t26" class="tx" style="left:66.00px;top:129.95px;font-size:11.3px;color:#3a3a3a;font-weight:400;transform:scaleX(1.0000);">Layout</span><span id="t27" class="tx" style="left:127.00px;top:83.11px;font-size:12px;color:#3a3a3a;font-weight:400;transform:scaleX(0.9474);">Outline</span><span id="t28" class="tx" style="left:126.04px;top:107.11px;font-size:12px;color:#3a3a3a;font-weight:400;transform:scaleX(0.9600);">Draft</span><span id="t29" class="tx" style="left:62.02px;top:152.45px;font-size:11.3px;color:#444;font-weight:400;transform:scaleX(0.9655);">Views</span><span id="t30" class="tx" style="left:191.03px;top:114.05px;font-size:11.3px;color:#3a3a3a;font-weight:400;transform:scaleX(0.9655);">Focus</span><span id="t31" class="tx" style="left:229.79px;top:114.05px;font-size:11.3px;color:#3a3a3a;font-weight:400;transform:scaleX(0.9961);">Immersive</span><span id="t32" class="tx" style="left:239.10px;top:129.55px;font-size:11.3px;color:#3a3a3a;font-weight:400;transform:scaleX(0.9028);">Reader</span><span id="t33" class="tx" style="left:211.85px;top:152.55px;font-size:11.3px;color:#444;font-weight:400;transform:scaleX(0.9039);">Immersive</span><span id="t34" class="tx" style="left:300.82px;top:114.05px;font-size:11.3px;color:#3a3a3a;font-weight:400;transform:scaleX(0.9556);">Vertical</span><span id="t35" class="tx" style="left:350.41px;top:114.05px;font-size:11.3px;color:#3a3a3a;font-weight:400;transform:scaleX(0.9227);">Side</span><span id="t36" class="tx" style="left:344.59px;top:129.55px;font-size:11.3px;color:#3a3a3a;font-weight:400;transform:scaleX(0.9629);">to Side</span><span id="t37" class="tx" style="left:299.07px;top:152.55px;font-size:11.3px;color:#444;font-weight:400;transform:scaleX(0.9259);">Page Movement</span><span id="t38" class="tx" style="left:415.06px;top:83.31px;font-size:12px;color:#3a3a3a;font-weight:400;transform:scaleX(0.8750);">Ruler</span><span id="t39" class="tx" style="left:415.04px;top:106.91px;font-size:12px;color:#3a3a3a;font-weight:400;transform:scaleX(0.9130);">Gridlines</span><span id="t40" class="tx" style="left:415.04px;top:131.61px;font-size:12px;color:#3a3a3a;font-weight:400;transform:scaleX(0.9241);">Navigation Pane</span><span id="t41" class="tx" style="left:435.40px;top:152.45px;font-size:11.3px;color:#444;font-weight:400;transform:scaleX(0.9464);">Show</span><span id="t42" class="tx" style="left:521.97px;top:114.05px;font-size:11.3px;color:#3a3a3a;font-weight:400;transform:scaleX(1.0536);">Zoom</span><span id="t43" class="tx" style="left:565.66px;top:114.05px;font-size:11.3px;color:#3a3a3a;font-weight:400;transform:scaleX(0.9071);">100%</span><span id="t44" class="tx" style="left:623.06px;top:83.61px;font-size:12px;color:#3a3a3a;font-weight:400;transform:scaleX(0.8774);">One Page</span><span id="t45" class="tx" style="left:623.04px;top:108.11px;font-size:12px;color:#3a3a3a;font-weight:400;transform:scaleX(0.9167);">Multiple Pages</span><span id="t46" class="tx" style="left:623.04px;top:132.31px;font-size:12px;color:#3a3a3a;font-weight:400;transform:scaleX(0.9131);">Page Width</span><span id="t47" class="tx" style="left:596.82px;top:152.55px;font-size:11.3px;color:#444;font-weight:400;transform:scaleX(0.9500);">Zoom</span><span id="t48" class="tx" style="left:741.65px;top:83.01px;font-size:12px;color:#3a3a3a;font-weight:400;transform:scaleX(0.9300);">New Window</span><span id="t49" class="tx" style="left:742.58px;top:107.81px;font-size:12px;color:#3a3a3a;font-weight:400;transform:scaleX(0.9293);">Arrange All</span><span id="t50" class="tx" style="left:741.69px;top:131.91px;font-size:12px;color:#3a3a3a;font-weight:400;transform:scaleX(0.8739);">Split</span><span id="t51" class="tx" style="left:851.00px;top:83.01px;font-size:12px;color:#b8b8b8;font-weight:400;transform:scaleX(0.8833);">View Side by Side</span><span id="t52" class="tx" style="left:850.07px;top:107.81px;font-size:12px;color:#b8b8b8;font-weight:400;transform:scaleX(0.9288);">Synchronous Scrolling</span><span id="t53" class="tx" style="left:850.08px;top:131.91px;font-size:12px;color:#b8b8b8;font-weight:400;transform:scaleX(0.9221);">Reset Window Position</span><span id="t54" class="tx" style="left:861.00px;top:152.25px;font-size:11.3px;color:#444;font-weight:400;transform:scaleX(1.0250);">Window</span><span id="t55" class="tx" style="left:997.79px;top:113.75px;font-size:11.3px;color:#3a3a3a;font-weight:400;transform:scaleX(0.9969);">Switch</span><span id="t56" class="tx" style="left:986.59px;top:129.55px;font-size:11.3px;color:#3a3a3a;font-weight:400;transform:scaleX(0.9826);">Windows</span><span id="t57" class="tx" style="left:1061.02px;top:115.25px;font-size:11.3px;color:#3a3a3a;font-weight:400;transform:scaleX(0.9833);">Macros</span><span id="t58" class="tx" style="left:1062.06px;top:151.75px;font-size:11.3px;color:#444;font-weight:400;transform:scaleX(0.9389);">Macros</span><span id="t59" class="tx" style="left:1117.03px;top:114.25px;font-size:11.3px;color:#3a3a3a;font-weight:400;transform:scaleX(0.9680);">Properties</span><span id="t60" class="tx" style="left:1117.04px;top:151.75px;font-size:11.3px;color:#444;font-weight:400;transform:scaleX(0.9236);">SharePoint</span><span id="t61" class="tx" style="left:-1.05px;top:658.85px;font-size:10.6px;color:#404040;font-weight:400;transform:scaleX(1.0459);">19 of 28</span><span id="t62" class="tx" style="left:55.99px;top:658.85px;font-size:10.6px;color:#404040;font-weight:400;transform:scaleX(1.0174);">136 of 9034 words</span><span id="t63" class="tx" style="left:189.38px;top:658.85px;font-size:10.6px;color:#404040;font-weight:400;transform:scaleX(1.0093);">English (United States)</span><span id="t64" class="tx" style="left:316.59px;top:658.85px;font-size:10.6px;color:#404040;font-weight:400;transform:scaleX(1.0074);">Text Predictions: On</span><span id="t65" class="tx" style="left:476.00px;top:658.85px;font-size:10.6px;color:#404040;font-weight:400;transform:scaleX(1.0017);">Accessibility: Unavailable</span><span id="t66" class="tx" style="left:919.03px;top:658.85px;font-size:10.6px;color:#404040;font-weight:400;transform:scaleX(0.9714);">Focus</span>
<!-- red boxes -->
<div class="a" style="left:284.2px;top:155px;width:95px;height:40px;border:4.6px solid #d7222b;border-top-width:5.8px;box-sizing:border-box;"></div>
<div class="a" style="left:861px;top:165.5px;width:50px;height:29.5px;border:4.3px solid #d7222b;box-sizing:border-box;"></div>

</body></html>
